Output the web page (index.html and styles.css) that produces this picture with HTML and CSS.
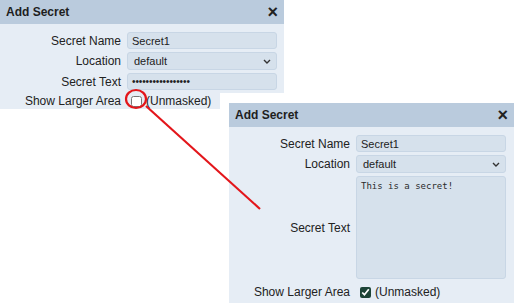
FILE: index.html
```html
<!DOCTYPE html>
<html>
<head>
<meta charset="utf-8">
<link rel="stylesheet" href="styles.css">
</head>
<body>
<div class="stage">
  <div class="panel panel-small">
    <div class="head"><span class="title">Add Secret</span><span class="close">×</span></div>
    <div class="form">
      <label class="lbl">Secret Name</label>
      <div class="field">Secret1</div>
      <label class="lbl">Location</label>
      <div class="field select"><span>default</span><svg width="8" height="5" viewBox="0 0 8 5"><path d="M1 1 L4 4 L7 1" fill="none" stroke="#333" stroke-width="1.4"/></svg></div>
      <label class="lbl">Secret Text</label>
      <div class="field pw">•••••••••••••••••</div>
      <label class="lbl">Show Larger Area</label>
      <div class="check check-small"><input type="checkbox" class="cb"><span>(Unmasked)</span></div>
    </div>
  </div>

  <div class="inset">
    <div class="panel panel-large">
      <div class="head"><span class="title">Add Secret</span><span class="close">×</span></div>
      <div class="form">
        <label class="lbl">Secret Name</label>
        <div class="field">Secret1</div>
        <label class="lbl">Location</label>
        <div class="field select"><span>default</span><svg width="8" height="5" viewBox="0 0 8 5"><path d="M1 1 L4 4 L7 1" fill="none" stroke="#333" stroke-width="1.4"/></svg></div>
        <label class="lbl">Secret Text</label>
        <div class="field area">This is a secret!</div>
        <label class="lbl">Show Larger Area</label>
        <div class="check"><input type="checkbox" class="cb" checked><span>(Unmasked)</span></div>
      </div>
    </div>
  </div>

  <svg class="annot" width="514" height="303" viewBox="0 0 514 303">
    <ellipse cx="136" cy="99" rx="10" ry="9" fill="none" stroke="#e3161b" stroke-width="2.2"/>
    <line x1="146" y1="106" x2="260" y2="209" stroke="#e3161b" stroke-width="2.2"/>
  </svg>
</div>
</body>
</html>
```
FILE: styles.css
```css
html, body {
  margin: 0;
  padding: 0;
  background: #ffffff;
}
.stage {
  position: relative;
  width: 514px;
  height: 303px;
  overflow: hidden;
  font-family: "Liberation Sans", Arial, sans-serif;
  color: #222;
}
.panel {
  background: #e6edf5;
  width: 284px;
}
.panel-small {
  height: 109px;
}
.panel-large {
  width: 285px;
  height: 210px;
}
.head {
  height: 24px;
  background: #bacbdd;
  display: flex;
  align-items: center;
  justify-content: space-between;
  padding: 0 6px 0 6px;
}
.title {
  font-weight: bold;
  font-size: 12px;
  color: #1e1e1e;
}
.close {
  font-weight: bold;
  font-size: 18px;
  color: #222;
  line-height: 1;
}
.form {
  display: grid;
  grid-template-columns: 121px 150px;
  column-gap: 6px;
  row-gap: 3px;
  padding-top: 8px;
  align-items: center;
}
.lbl {
  text-align: right;
  font-size: 12px;
  color: #222;
}
.field {
  box-sizing: border-box;
  height: 17px;
  background: #d6e1ec;
  border: 1px solid #c8d6e5;
  border-radius: 3px;
  font-size: 11px;
  padding: 0 4px;
  display: flex;
  align-items: center;
  color: #222;
}
.select {
  justify-content: space-between;
  padding: 0 5px 0 6px;
  height: 18px;
}
.pw {
  font-size: 10px;
  letter-spacing: -0.1px;
}
.area {
  height: 103px;
  align-items: flex-start;
  padding: 4px 4px;
  font-family: "DejaVu Sans Mono", "Liberation Mono", monospace;
  font-size: 9px;
  color: #2a2a2a;
}
.check {
  display: flex;
  align-items: center;
  height: 20px;
  font-size: 12px;
  color: #222;
}
.check-small {
  height: 16px;
}
.cb {
  width: 11px;
  height: 11px;
  margin: 0 4px 0 4px;
  accent-color: #1d4437;
}
.inset {
  position: absolute;
  left: 220px;
  top: 93px;
  right: 0;
  bottom: 0;
  background: #ffffff;
  padding: 10px 0 0 9px;
}
.annot {
  position: absolute;
  left: 0;
  top: 0;
  pointer-events: none;
}
```
